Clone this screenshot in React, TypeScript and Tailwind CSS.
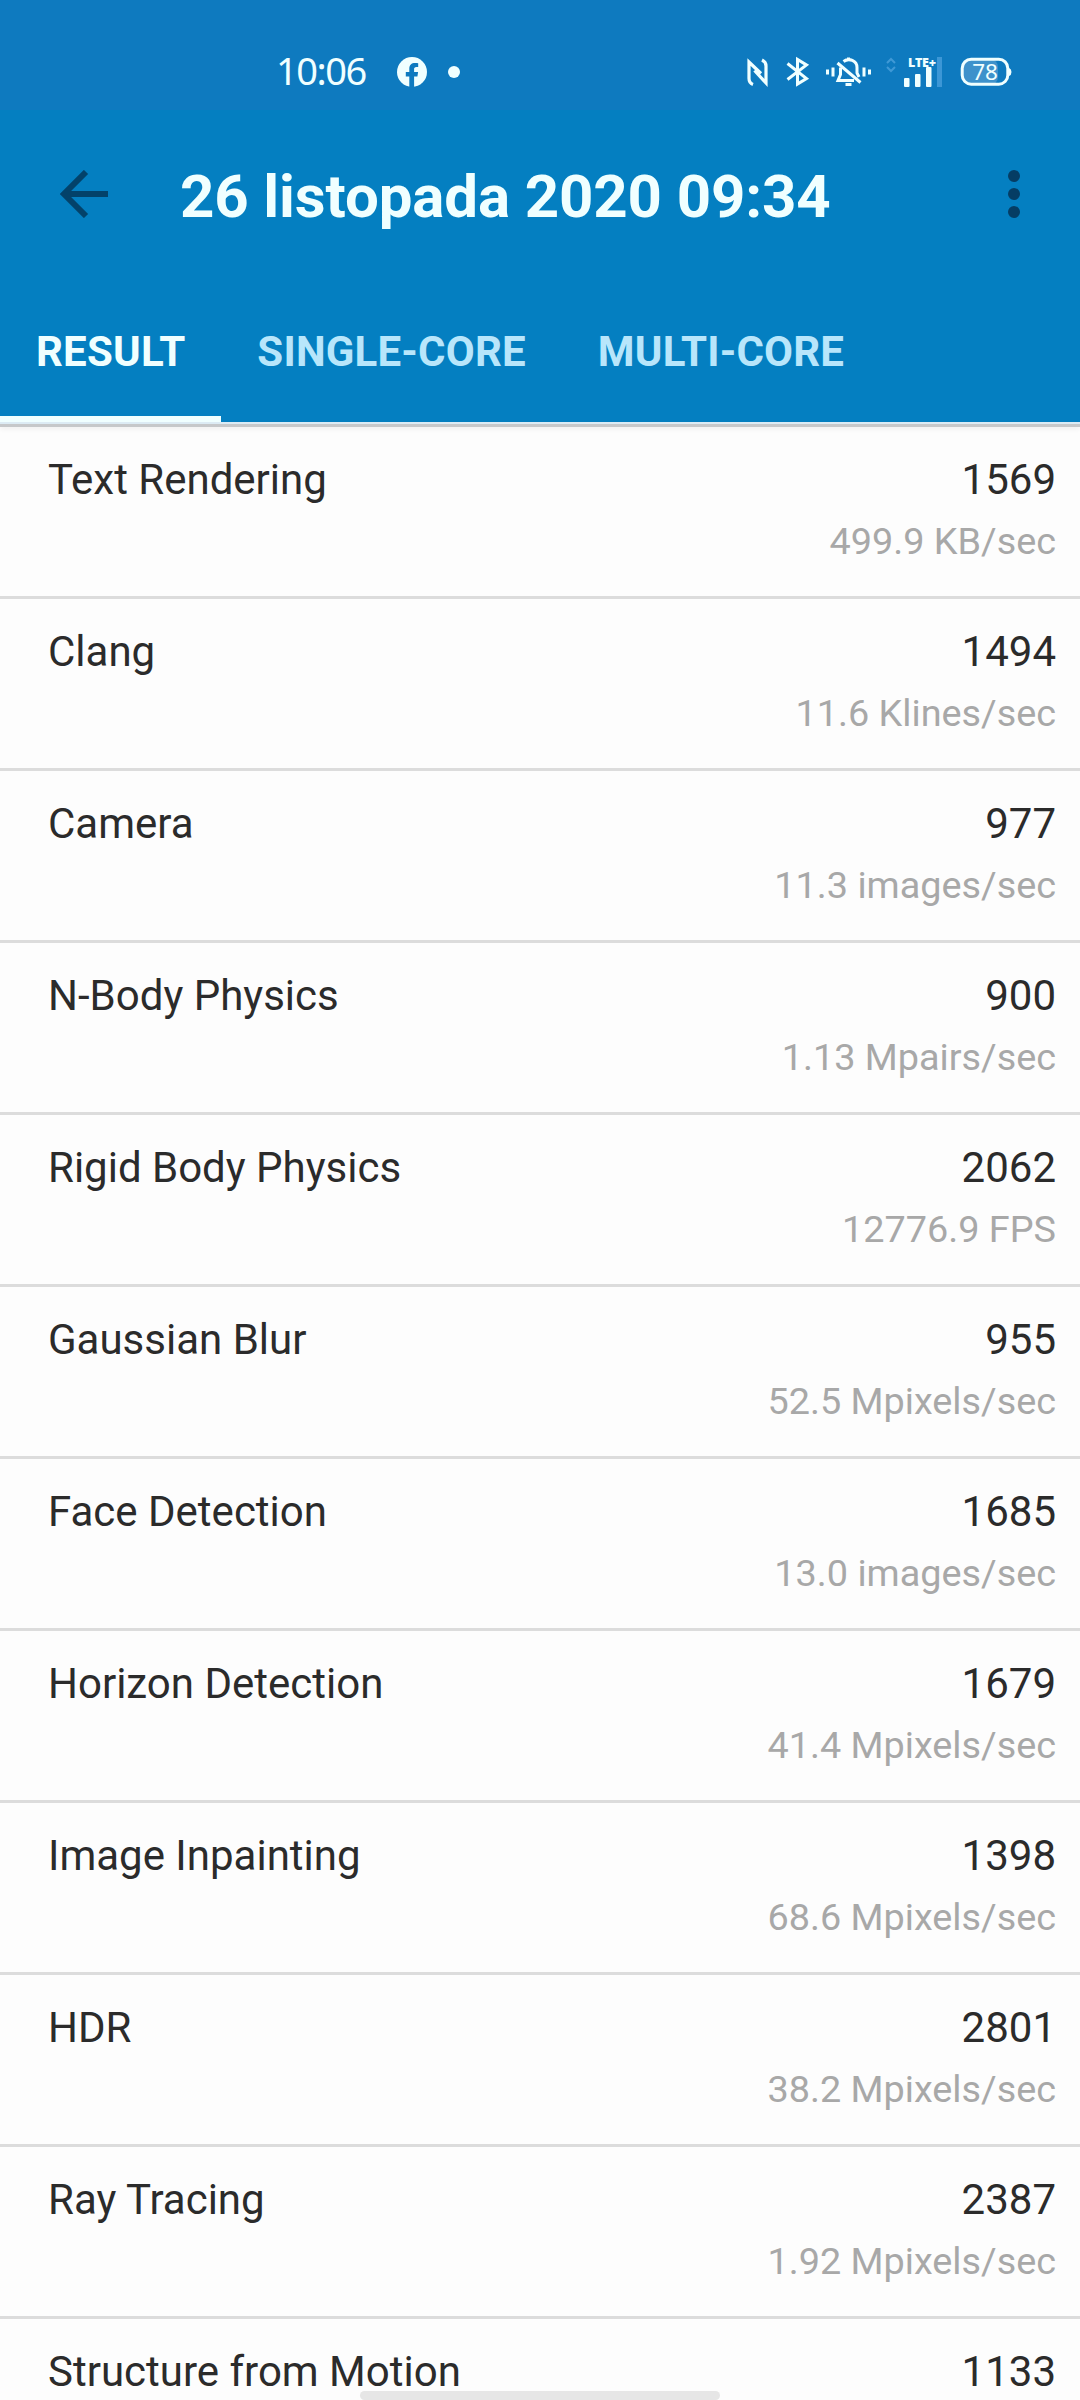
import React from 'react';

interface Workload {
  name: string;
  score: number;
  rate?: string;
}

const workloads: Workload[] = [
  { name: 'Text Rendering', score: 1569, rate: '499.9 KB/sec' },
  { name: 'Clang', score: 1494, rate: '11.6 Klines/sec' },
  { name: 'Camera', score: 977, rate: '11.3 images/sec' },
  { name: 'N-Body Physics', score: 900, rate: '1.13 Mpairs/sec' },
  { name: 'Rigid Body Physics', score: 2062, rate: '12776.9 FPS' },
  { name: 'Gaussian Blur', score: 955, rate: '52.5 Mpixels/sec' },
  { name: 'Face Detection', score: 1685, rate: '13.0 images/sec' },
  { name: 'Horizon Detection', score: 1679, rate: '41.4 Mpixels/sec' },
  { name: 'Image Inpainting', score: 1398, rate: '68.6 Mpixels/sec' },
  { name: 'HDR', score: 2801, rate: '38.2 Mpixels/sec' },
  { name: 'Ray Tracing', score: 2387, rate: '1.92 Mpixels/sec' },
  { name: 'Structure from Motion', score: 1133 },
];

const tabs = ['RESULT', 'SINGLE-CORE', 'MULTI-CORE'];

const StatusIcons: React.FC = () => (
  <div className="ml-auto mt-1 flex">
    {/* NFC */}
    <svg className="h-8 w-6" viewBox="0 0 24 32" fill="none" stroke="currentColor" strokeWidth="3.2">
      <path d="M7 28.500Q3 27 3 22.500V6L15 17.500M16 4Q20 6 20 10V27L8.500 14.500" />
    </svg>
    {/* Bluetooth */}
    <svg className="ml-4 h-8 w-6" viewBox="0 0 24 32" fill="none" stroke="currentColor" strokeWidth="3">
      <path d="M1.500 7.500L20.500 22.500L11.500 28V3.500L20.500 9L1.500 23.500" />
    </svg>
    {/* Silent */}
    <svg className="ml-4 h-8 w-[46px]" viewBox="0 0 46 32" fill="none" stroke="currentColor" strokeWidth="3">
      <path d="M1.500 13.500v5M7 11.500v9M38 11.500v9M43.500 13.500v5" />
      <path d="M11.500 7L34.500 26.500" />
      <path d="M14.500 11.500v7L12 24.500H28" />
      <path d="M17.500 5.500C23 1.500 31 4.500 31 11.500V17l2 4M22.500 1.500v3" />
      <path d="M19.500 28.500h6" />
    </svg>
    {/* Data arrows */}
    <svg className="ml-[14px] h-8 w-[10px]" viewBox="0 0 10 32" fill="none" stroke="#3f99d6" strokeWidth="2">
      <path d="M1 7l4-4 4 4M1 11l4 4 4-4" />
    </svg>
    {/* Signal */}
    <svg className="ml-2 h-8 w-[38px] overflow-visible" viewBox="0 0 38 32" fill="currentColor">
      <rect x="33" y="1" width="5" height="30" fill="#3c97d6" />
      <rect x="0" y="22" width="5.500" height="9" rx="1" />
      <rect x="11" y="18" width="5.500" height="13" rx="1" />
      <rect x="22" y="11" width="5.500" height="20" rx="1" />
      <text x="4" y="11" fontSize="12.5" fontWeight="800" textLength="28" className="font-['Open_Sans',sans-serif]">
        LTE+
      </text>
    </svg>
    {/* Battery */}
    <svg className="ml-[18px] h-8 w-[52px]" viewBox="0 0 52 32" fill="none">
      <rect x="2" y="3" width="36" height="26" rx="8" fill="#3e92cb" />
      <rect x="2.200" y="3.200" width="45.600" height="25" rx="9" stroke="currentColor" strokeWidth="3" />
      <path d="M49 12q2.500 1 2.500 4t-2.500 4z" fill="currentColor" />
      <text x="25" y="24" fontSize="22.5" textAnchor="middle" fill="currentColor" className="font-['Noto_Sans',sans-serif]">
        78
      </text>
    </svg>
  </div>
);

const StatusBar: React.FC = () => (
  <div className="flex h-[110px] items-start bg-[#0e7abf] pl-[276px] pr-[68px] pt-[52px] text-[#f0ffff]">
    <span className="-mt-[2px] w-[92px] whitespace-nowrap font-['Noto_Sans',sans-serif] text-[38px] leading-[40px] tracking-[-1.5px]">
      10:06
    </span>
    <svg className="ml-[29px] mt-[5px] h-[30px] w-[30px]" viewBox="0 0 30 30">
      <circle cx="15" cy="15" r="15" fill="currentColor" />
      <path
        d="M12.300 30V19.400H8.800V15h3.500v-3.200C12.300 8 14.500 6 18 6c1.600 0 3.200.2 3.200.2v3.800h-1.800c-1.800 0-2.300 1-2.300 2.100V15h4l-.7 4.400h-3.300V30z"
        fill="#0e7abf"
      />
    </svg>
    <div className="ml-[21px] mt-[14px] h-3 w-3 rounded-full bg-current" />
    <StatusIcons />
  </div>
);

const AppBar: React.FC = () => (
  <div className="flex h-[174px] items-center bg-[#047fc1] pb-[6px] pl-[60px] pr-[60px]">
    <svg className="h-12 w-12" viewBox="0 0 48 48" fill="none" stroke="#03426a" strokeWidth="6">
      <path d="M48 24H5M26 2L4 24l22 22" />
    </svg>
    <h1 className="ml-[72px] mt-[5px] flex-1 whitespace-nowrap text-[60px] font-bold leading-[70px] tracking-[-0.13px] text-[#f0ffff]">
      26 listopada 2020 09:34
    </h1>
    <div className="flex flex-col gap-[6px]">
      <div className="h-3 w-3 rounded-full bg-[#053d64]" />
      <div className="h-3 w-3 rounded-full bg-[#053d64]" />
      <div className="h-3 w-3 rounded-full bg-[#053d64]" />
    </div>
  </div>
);

const App: React.FC = () => {
  return (
    <div className="relative h-[2400px] w-[1080px] overflow-hidden bg-[#fdfdfd] font-['Roboto',sans-serif]">
      <StatusBar />
      <AppBar />
      <div className="flex h-[138px] bg-[#047fc1]">
        {tabs.map((tab, i) => (
          <div
            key={tab}
            className={`h-full px-9 pt-[43px] text-[42px] font-bold leading-[50px] tracking-[0.2px] ${
              i === 0 ? 'border-b-[6px] border-[#f0ffff] text-[#f0ffff]' : 'text-[#b8e6fb]'
            }`}
          >
            {tab}
          </div>
        ))}
      </div>
      <div className="h-[5px] border-b-[3px] border-[#c6c8ca] bg-[#dcebf4] shadow-[0_2px_5px_rgba(0,0,0,0.06)]" />
      {workloads.map((w) => (
        <div key={w.name} className="flex h-[172px] justify-between border-b-[3px] border-[#dcdcdc] pl-12 pr-6 pt-7">
          <span className="text-[42px] leading-[50px] text-[#2b2b2b]">{w.name}</span>
          <div className="flex flex-col items-end gap-[15px]">
            <span className="text-[42px] leading-[50px] text-[#2b2b2b]">{w.score}</span>
            {w.rate && <span className="text-[37.8px] leading-[42px] text-[#a8a8a8]">{w.rate}</span>}
          </div>
        </div>
      ))}
      <div className="absolute bottom-0 left-[360px] h-[9px] w-[360px] rounded-[5px] bg-[#e6e6e6]" />
    </div>
  );
};

export default App;
